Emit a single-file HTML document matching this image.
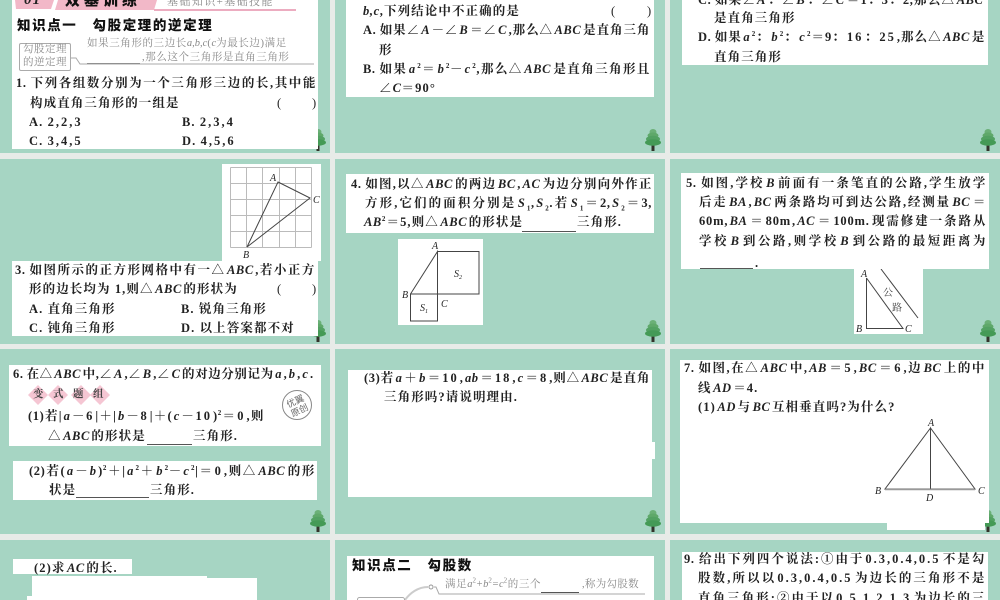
<!DOCTYPE html>
<html><head><meta charset="utf-8"><style>
html,body{margin:0;padding:0;background:#e8ebe8}
#p{position:relative;width:1000px;height:600px;overflow:hidden;background:#e8ebe8;filter:blur(.35px);font-family:"Liberation Serif","Noto Serif CJK SC",serif;font-weight:700;font-size:12.5px;color:#222}
.g,.w,.l,svg{position:absolute}
.g{background:#a6d5c3}
.w{background:#fff}
.l{line-height:20px;white-space:nowrap;letter-spacing:1.1px}
.j{text-align:justify;text-align-last:justify;letter-spacing:.6px}
i{font-style:italic;font-family:"Liberation Serif",serif;margin:0 1.5px;letter-spacing:.6px}
b{letter-spacing:2px;margin:0 1px}
em{font-style:normal;display:inline-block;margin-right:3px}
sup,sub{font-size:7px;line-height:0}
.h{font-family:"Liberation Sans","Noto Sans CJK SC",sans-serif;font-weight:900;font-size:13.5px;color:#111;letter-spacing:1.6px}
.c{color:#888;font-weight:400;font-size:10.5px;letter-spacing:.6px}
.c i{margin:0;letter-spacing:0}
.u{position:absolute;height:1px;background:#555}
</style></head><body><div id="p">
<div class="g" style="left:0;top:0;width:330px;height:153px"></div>
<div class="g" style="left:335px;top:0;width:330px;height:153px"></div>
<div class="g" style="left:670px;top:0;width:330px;height:153px"></div>
<div class="g" style="left:0;top:159px;width:330px;height:185px"></div>
<div class="g" style="left:335px;top:159px;width:330px;height:185px"></div>
<div class="g" style="left:670px;top:159px;width:330px;height:185px"></div>
<div class="g" style="left:0;top:349px;width:330px;height:185px"></div>
<div class="g" style="left:335px;top:349px;width:330px;height:185px"></div>
<div class="g" style="left:670px;top:349px;width:330px;height:185px"></div>
<div class="g" style="left:0;top:540px;width:330px;height:60px"></div>
<div class="g" style="left:335px;top:540px;width:330px;height:60px"></div>
<div class="g" style="left:670px;top:540px;width:330px;height:60px"></div>

<svg width="1000" height="600" style="left:0;top:0">
<defs><g id="t"><rect x="-1.5" y="14" width="3" height="8" fill="#33332a"/><ellipse cx="0" cy="3" rx="3.5" ry="3" fill="#6bb077"/><ellipse cx="0" cy="6.500" rx="5.500" ry="3" fill="#5fa86a"/><ellipse cx="0" cy="10" rx="7" ry="3.200" fill="#52a162"/><ellipse cx="0" cy="13.500" rx="8" ry="3.200" fill="#449a56"/></g></defs>
<use href="#t" x="318" y="129"/><use href="#t" x="653" y="129"/><use href="#t" x="988" y="129"/>
<use href="#t" x="318" y="320"/><use href="#t" x="653" y="320"/><use href="#t" x="988" y="320"/>
<use href="#t" x="318" y="510"/><use href="#t" x="653" y="510"/><use href="#t" x="988" y="510"/>
</svg>

<div class="w" style="left:12px;top:0;width:306px;height:149px"></div>
<div class="w" style="left:346px;top:0;width:308px;height:97px"></div>
<div class="w" style="left:682px;top:0;width:306px;height:65px"></div>
<div class="w" style="left:222px;top:164px;width:99px;height:97px"></div>
<div class="w" style="left:12px;top:261px;width:306px;height:75px"></div>
<div class="w" style="left:346px;top:174px;width:308px;height:59px"></div>
<div class="w" style="left:398px;top:239px;width:85px;height:86px"></div>
<div class="w" style="left:681px;top:173px;width:308px;height:96px"></div>
<div class="w" style="left:854px;top:269px;width:69px;height:65px"></div>
<div class="w" style="left:9px;top:365px;width:312px;height:81px"></div>
<div class="w" style="left:13px;top:461px;width:304px;height:39px"></div>
<div class="w" style="left:348px;top:370px;width:304px;height:127px"></div>
<div class="w" style="left:652px;top:442px;width:3px;height:17px"></div>
<div class="w" style="left:680px;top:360px;width:309px;height:163px"></div>
<div class="w" style="left:887px;top:523px;width:98px;height:7px"></div>
<div class="w" style="left:13px;top:559px;width:119px;height:15px"></div>
<div class="w" style="left:32px;top:576px;width:175px;height:24px"></div>
<div class="w" style="left:207px;top:578px;width:50px;height:22px"></div>
<div class="w" style="left:27px;top:596px;width:10px;height:4px"></div>
<div class="w" style="left:347px;top:556px;width:307px;height:44px"></div>
<div class="w" style="left:682px;top:552px;width:306px;height:48px"></div>

<!-- header -->
<svg width="300" height="14" style="left:12px;top:0"><polygon points="3,0 42,0 39,9 4,9" fill="#f2b8c8"/><polygon points="46,0 145,0 142,10 43,10" fill="#f2b8c8"/><rect x="142" y="9" width="142" height="2" fill="#ecacc0"/></svg>
<div class="l" style="left:24px;top:-10px;font-size:15px;font-style:italic">01</div>
<div class="l h" style="left:65px;top:-9px;font-size:15px;letter-spacing:4px">双基训练</div>
<div class="l c" style="left:167px;top:-8px;font-size:11px;letter-spacing:1.4px">基础知识+基础技能</div>

<div class="l h" style="left:17px;top:16px">知识点一　勾股定理的逆定理</div>
<div style="position:absolute;left:19px;top:43px;width:50px;height:26px;border:1px solid #aaa;border-radius:2px"></div>
<div class="l c" style="left:23px;top:40px;letter-spacing:.5px">勾股定理</div>
<div class="l c" style="left:23px;top:53px;letter-spacing:.5px">的逆定理</div>
<div class="l c" style="left:87px;top:34px">如果三角形的三边长<i>a,b,c</i>(<i>c</i>为最长边)满足</div>
<div class="l c" style="left:142px;top:48px">,那么这个三角形是直角三角形</div>
<div class="u" style="left:87px;top:63px;width:53px;background:#777"></div>
<svg width="250" height="12" style="left:70px;top:55px"><path d="M1 3H6L10 9H244" fill="none" stroke="#aaa"/></svg>

<div class="l j" style="left:16px;top:73px;width:300px"><em>1.</em>下列各组数分别为一个三角形三边的长,其中能</div>
<div class="l" style="left:30px;top:93px">构成直角三角形的一组是</div>
<div class="l" style="left:277px;top:93px;font-weight:400">(</div><div class="l" style="left:312px;top:93px;font-weight:400">)</div>
<div class="l" style="left:29px;top:112px">A. <b style="margin:0">2,2,3</b></div><div class="l" style="left:182px;top:112px">B. <b style="margin:0">2,3,4</b></div>
<div class="l" style="left:29px;top:131px">C. <b style="margin:0">3,4,5</b></div><div class="l" style="left:182px;top:131px">D. <b style="margin:0">4,5,6</b></div>

<div class="l" style="left:363px;top:1px"><i style="margin:0">b,c</i>,下列结论中不正确的是</div>
<div class="l" style="left:611px;top:1px;font-weight:400">(</div><div class="l" style="left:647px;top:1px;font-weight:400">)</div>
<div class="l j" style="left:363px;top:20px;width:287px"><em>A.</em>如果∠<i>A</i>－∠<i>B</i>＝∠<i>C</i>,那么△<i>ABC</i>是直角三角</div>
<div class="l" style="left:379px;top:40px">形</div>
<div class="l j" style="left:363px;top:59px;width:287px"><em>B.</em>如果<i>a</i><sup>2</sup>＝<i>b</i><sup>2</sup>－<i>c</i><sup>2</sup>,那么△<i>ABC</i>是直角三角形且</div>
<div class="l" style="left:379px;top:78px">∠<i style="margin:0">C</i>＝90°</div>

<div class="l j" style="left:698px;top:-10px;width:287px"><em>C.</em>如果∠<i>A</i>：∠<i>B</i>：∠<i>C</i>＝1：3：2,那么△<i>ABC</i></div>
<div class="l" style="left:714px;top:8px">是直角三角形</div>
<div class="l j" style="left:698px;top:27px;width:287px"><em>D.</em>如果<i>a</i><sup>2</sup>：<i>b</i><sup>2</sup>：<i>c</i><sup>2</sup>＝9：<b>16</b>：<b>25</b>,那么△<i>ABC</i>是</div>
<div class="l" style="left:714px;top:47px">直角三角形</div>

<!-- row 2 left -->
<svg width="99" height="97" style="left:222px;top:164px"><path d="M8.500 3.500H89.500M8.500 19.500H89.500M8.500 35.500H89.500M8.500 51.500H89.500M8.500 67.500H89.500M8.500 83.500H89.500M8.500 3.500V83.500M24.500 3.500V83.500M40.500 3.500V83.500M57.500 3.500V83.500M73.500 3.500V83.500M89.500 3.500V83.500" stroke="#bbb" fill="none"/><path d="M56 18L88 34L25 83Z" stroke="#444" fill="none"/><text x="48" y="17" font-size="10" font-style="italic" font-weight="400" fill="#222">A</text><text x="91" y="39" font-size="10" font-style="italic" font-weight="400" fill="#222">C</text><text x="21" y="94" font-size="10" font-style="italic" font-weight="400" fill="#222">B</text></svg>
<div class="l j" style="left:15px;top:260px;width:300px"><em>3.</em>如图所示的正方形网格中有一△<i>ABC</i>,若小正方</div>
<div class="l" style="left:29px;top:279px">形的边长均为 1,则△<i>ABC</i>的形状为</div>
<div class="l" style="left:277px;top:279px;font-weight:400">(</div><div class="l" style="left:312px;top:279px;font-weight:400">)</div>
<div class="l" style="left:29px;top:299px">A. 直角三角形</div><div class="l" style="left:181px;top:299px">B. 锐角三角形</div>
<div class="l" style="left:29px;top:318px">C. 钝角三角形</div><div class="l" style="left:181px;top:318px">D. 以上答案都不对</div>

<!-- row 2 mid -->
<div class="l j" style="left:351px;top:174px;width:301px"><em>4.</em>如图,以△<i>ABC</i>的两边<i>BC</i>,<i>AC</i>为边分别向外作正</div>
<div class="l j" style="left:365px;top:193px;width:287px">方形,它们的面积分别是<i>S</i><sub>1</sub>,<i>S</i><sub>2</sub>.若<i>S</i><sub>1</sub>＝2,<i>S</i><sub>2</sub>＝3,</div>
<div class="l" style="left:364px;top:212px"><i style="margin:0">AB</i><sup>2</sup>＝5,则△<i>ABC</i>的形状是</div>
<div class="l" style="left:577px;top:212px">三角形.</div>
<div class="u" style="left:522px;top:231px;width:54px"></div>
<svg width="85" height="86" style="left:398px;top:239px"><path d="M39.500 12.500H81V55H12.500V82H39.500V12.500L12.500 55" fill="none" stroke="#444"/><g font-size="10" font-style="italic" font-weight="400" fill="#222"><text x="34" y="10">A</text><text x="4" y="59">B</text><text x="43" y="68">C</text><text x="56" y="38">S<tspan font-size="6" dy="2">2</tspan></text><text x="22" y="72">S<tspan font-size="6" dy="2">1</tspan></text></g></svg>

<!-- row 2 right -->
<div class="l j" style="left:686px;top:173px;width:300px"><em>5.</em>如图,学校<i>B</i>前面有一条笔直的公路,学生放学</div>
<div class="l j" style="left:699px;top:192px;width:287px">后走<i>BA</i>,<i>BC</i>两条路均可到达公路,经测量<i>BC</i>＝</div>
<div class="l j" style="left:699px;top:211px;width:287px"><b style="margin:0;letter-spacing:.8px">60m</b>,<i>BA</i>＝<b style="letter-spacing:.8px">80m</b>,<i>AC</i>＝<b style="letter-spacing:.8px">100m.</b>现需修建一条路从</div>
<div class="l j" style="left:699px;top:231px;width:287px">学校<i>B</i>到公路,则学校<i>B</i>到公路的最短距离为</div>
<div class="u" style="left:700px;top:268px;width:53px"></div>
<div class="l" style="left:755px;top:253px">.</div>
<svg width="69" height="65" style="left:854px;top:269px"><path d="M12.500 9V59.500H49L12.500 9M27 0L64 49" fill="none" stroke="#444"/><g font-size="10" font-style="italic" font-weight="400" fill="#222"><text x="7" y="8">A</text><text x="2" y="63">B</text><text x="51" y="63">C</text></g><g font-size="10" font-weight="400" fill="#444" font-family="Noto Serif CJK SC"><text x="29" y="27">公</text><text x="38" y="42">路</text></g></svg>

<!-- row 3 left -->
<div class="l j" style="left:13px;top:364px;width:293px"><em>6.</em>在△<i>ABC</i>中,∠<i>A</i>,∠<i>B</i>,∠<i>C</i>的对边分别记为<i>a</i>,<i>b</i>,<i>c</i>.</div>
<svg width="90" height="20" style="left:28px;top:385px"><g fill="#f5c6d3"><path d="M10 0L20 10L10 20L0 10Z"/><path d="M30 0L40 10L30 20L20 10Z"/><path d="M53 0L63 10L53 20L43 10Z"/><path d="M72 0L82 10L72 20L62 10Z"/></g></svg>
<div class="l" style="left:33px;top:385px;font-size:10.5px;letter-spacing:9.5px;color:#444">变式题组</div>
<div class="l j" style="left:28px;top:406px;width:236px">(1)若|<i>a</i>－<b>6</b>|＋|<i>b</i>－<b>8</b>|＋(<i>c</i>－<b>10</b>)<sup>2</sup>＝<b>0</b>,则</div>
<div class="l" style="left:48px;top:426px">△<i>ABC</i>的形状是</div>
<div class="l" style="left:193px;top:426px">三角形.</div>
<div class="u" style="left:147px;top:444px;width:45px"></div>
<svg width="32" height="32" style="left:281px;top:389px"><circle cx="16" cy="16" r="14.500" fill="#fff" stroke="#888"/><text x="16" y="15" text-anchor="middle" font-size="9" font-weight="400" fill="#666" font-family="Noto Sans CJK SC" transform="rotate(-25 16 16)">优翼</text><text x="16" y="25" text-anchor="middle" font-size="9" font-weight="400" fill="#666" font-family="Noto Sans CJK SC" transform="rotate(-25 16 16)">原创</text></svg>
<div class="l j" style="left:29px;top:461px;width:286px">(2)若(<i>a</i>－<i>b</i>)<sup>2</sup>＋|<i>a</i><sup>2</sup>＋<i>b</i><sup>2</sup>－<i>c</i><sup>2</sup>|＝<b>0</b>,则△<i>ABC</i>的形</div>
<div class="l" style="left:49px;top:480px">状是</div>
<div class="l" style="left:150px;top:480px">三角形.</div>
<div class="u" style="left:76px;top:497px;width:73px"></div>

<!-- row 3 mid -->
<div class="l j" style="left:364px;top:368px;width:286px">(3)若<i>a</i>＋<i>b</i>＝<b>10</b>,<i>ab</i>＝<b>18</b>,<i>c</i>＝<b>8</b>,则△<i>ABC</i>是直角</div>
<div class="l" style="left:384px;top:387px">三角形吗?请说明理由.</div>

<!-- row 3 right -->
<div class="l j" style="left:684px;top:358px;width:301px"><em>7.</em>如图,在△<i>ABC</i>中,<i>AB</i>＝<b>5</b>,<i>BC</i>＝<b>6</b>,边<i>BC</i>上的中</div>
<div class="l" style="left:698px;top:378px">线<i>AD</i>＝4.</div>
<div class="l" style="left:698px;top:397px">(1)<i>AD</i>与<i>BC</i>互相垂直吗?为什么?</div>
<svg width="120" height="90" style="left:870px;top:415px"><path d="M60.500 13L15 74H105L60.500 13V74" fill="none" stroke="#444"/><path d="M15 74.500H105" stroke="#999" stroke-width="1.500"/><g font-size="10" font-style="italic" font-weight="400" fill="#222"><text x="58" y="11">A</text><text x="5" y="79">B</text><text x="108" y="79">C</text><text x="56" y="86">D</text></g></svg>

<!-- row 4 -->
<div class="l" style="left:34px;top:558px">(2)求<i>AC</i>的长.</div>
<div class="l h" style="left:352px;top:556px;font-size:13.5px">知识点二　勾股数</div>
<div class="l c" style="left:445px;top:575px">满足<i>a</i><sup>2</sup>+<i>b</i><sup>2</sup>=<i>c</i><sup>2</sup>的三个</div>
<div class="l c" style="left:582px;top:575px;letter-spacing:.3px">,称为勾股数</div>
<div class="u" style="left:541px;top:592px;width:38px"></div>
<svg width="320" height="50" style="left:340px;top:575px"><path d="M65 25C70 18 78 12 88 12" fill="none" stroke="#ccc" stroke-width="2"/><circle cx="91" cy="12" r="2" fill="#fff" stroke="#999"/><path d="M94 12H96L99 19H305" fill="none" stroke="#aaa"/><rect x="17.500" y="22.500" width="47" height="30" rx="2" fill="#fff" stroke="#aaa"/></svg>
<div class="l j" style="left:684px;top:549px;width:301px"><em>9.</em>给出下列四个说法:①由于<b>0.3,0.4,0.5</b>不是勾</div>
<div class="l j" style="left:698px;top:568px;width:287px">股数,所以以<b>0.3,0.4,0.5</b>为边长的三角形不是</div>
<div class="l j" style="left:698px;top:588px;width:287px">直角三角形;②由于以<b>0.5,1.2,1.3</b>为边长的三</div>
</div></body></html>
